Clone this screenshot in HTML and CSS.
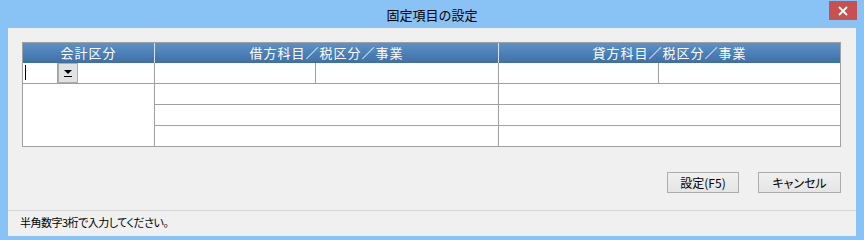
FILE: index.html
```html
<!DOCTYPE html>
<html lang="ja">
<head>
<meta charset="utf-8">
<title>固定項目の設定</title>
<link rel="stylesheet" href="styles.css">
</head>
<body>
<div class="window">
  <div class="titlebar">
    <span class="spacer"></span>
    <span class="title">固定項目の設定</span>
    <div class="close-wrap">
      <div class="close">
        <svg width="10" height="10" viewBox="0 0 10 10"><path d="M1 1 L9 9 M9 1 L1 9" stroke="#fff" stroke-width="1.8" fill="none"/></svg>
      </div>
    </div>
  </div>
  <div class="client">
    <div class="grid">
      <div class="hcell sep">会計区分</div>
      <div class="hcell sep">借方科目／税区分／事業</div>
      <div class="hcell">貸方科目／税区分／事業</div>

      <div class="cell c1 bb">
        <div class="edit"><span class="caret"></span></div>
        <div class="drop">
          <svg width="10" height="10" viewBox="0 0 10 10"><path d="M1 2 H9 L5 6 Z" fill="#000"/><rect x="1" y="8" width="8" height="1" fill="#000"/></svg>
        </div>
      </div>
      <div class="cell c2 bb split"><div class="sub s2"></div><div class="sub"></div></div>
      <div class="cell bb split"><div class="sub s3"></div><div class="sub"></div></div>

      <div class="cell c1 merged"></div>
      <div class="cell c2 bb"></div>
      <div class="cell bb"></div>
      <div class="cell c2 bb"></div>
      <div class="cell bb"></div>
      <div class="cell c2"></div>
      <div class="cell"></div>
    </div>
    <div class="actions">
      <button class="btn btn-set">設定(F5)</button>
      <button class="btn btn-cancel">キャンセル</button>
    </div>
    <div class="status">半角数字3桁で入力してください。</div>
  </div>
</div>
</body>
</html>
```

FILE: styles.css
```css
* { box-sizing: border-box; }
html, body { margin: 0; padding: 0; }
body {
  font-family: "Noto Sans CJK JP", "Liberation Sans", sans-serif;
  width: 864px;
  height: 240px;
  overflow: hidden;
}
.window {
  width: 864px;
  height: 240px;
  background: #89c2f5;
  padding: 0 8px 4px 8px;
  display: flex;
  flex-direction: column;
}
.titlebar {
  height: 28px;
  display: grid;
  grid-template-columns: 1fr auto 1fr;
  align-items: start;
  margin: 0 -8px;
}
.title {
  font-size: 13px;
  color: #000;
  line-height: 28px;
  padding-top: 1px;
}
.close-wrap {
  display: flex;
  justify-content: flex-end;
  padding-right: 7px;
  padding-top: 1px;
}
.close {
  width: 28px;
  height: 19px;
  background: #c75050;
  display: flex;
  align-items: center;
  justify-content: center;
}
.client {
  flex: 1;
  background: #f0f0f0;
  padding-top: 14px;
  display: flex;
  flex-direction: column;
}
.grid {
  margin-left: 14px;
  width: 819px;
  border: 1px solid #a0a0a0;
  display: grid;
  grid-template-columns: 132px 344px 341px;
  grid-template-rows: 20px 21px 21px 21px 20px;
  background: #fff;
}
.hcell {
  background: linear-gradient(#5d91c7, #3b6fa5);
  color: #fff;
  font-size: 13px;
  letter-spacing: 1px;
  text-align: center;
  line-height: 20px;
}
.hcell.sep { border-right: 1px solid #d6e2ee; }
.cell { background: #fff; }
.c1, .c2 { border-right: 1px solid #a0a0a0; }
.bb { border-bottom: 1px solid #a0a0a0; }
.merged { grid-row: 3 / span 3; }
.c1.bb { display: flex; }
.edit {
  width: 35px;
  border-right: 1px solid #a0a0a0;
  padding: 2px 0 0 2px;
}
.caret {
  display: block;
  width: 1px;
  height: 15px;
  background: #000;
}
.drop {
  width: 20px;
  height: 20px;
  background: #e2e2e2;
  border: 1px solid #adadad;
  display: flex;
  align-items: center;
  justify-content: center;
}
.split { display: flex; }
.sub { height: 100%; }
.s2 { width: 161px; border-right: 1px solid #a0a0a0; }
.s3 { width: 160px; border-right: 1px solid #a0a0a0; }
.actions {
  display: flex;
  justify-content: flex-end;
  gap: 19px;
  margin-top: 25px;
  padding-right: 15px;
}
.btn {
  height: 21px;
  border: 1px solid #acacac;
  background: linear-gradient(#f0f0f0, #e5e5e5);
  font-family: "Noto Sans CJK JP", sans-serif;
  font-size: 12px;
  color: #000;
  padding: 0;
  line-height: 19px;
}
.btn-set { width: 72px; }
.btn-cancel { width: 83px; font-feature-settings: "palt"; }
.status {
  margin-top: 17px;
  border-top: 1px solid #d7d7d7;
  height: 26px;
  padding-left: 12px;
  font-size: 11px;
  letter-spacing: -0.5px;
  font-feature-settings: "palt";
  line-height: 23px;
  color: #000;
}
```
